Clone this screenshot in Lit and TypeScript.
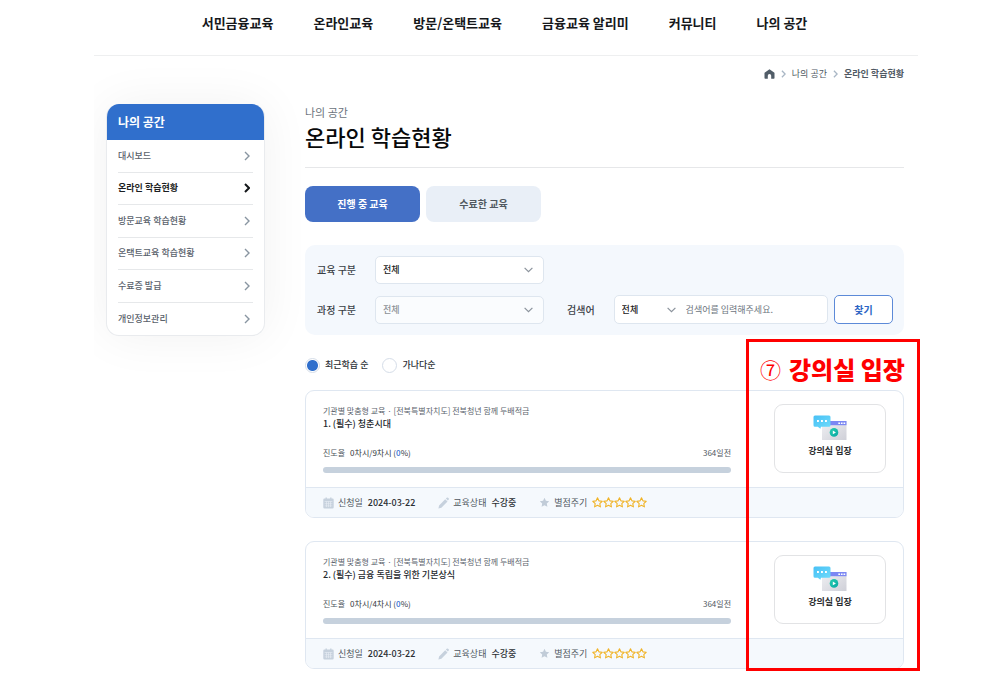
import { LitElement, html, css, svg } from "lit";
import { customElement, property, state } from "lit/decorators.js";
import { classMap } from "lit/directives/class-map.js";

const base = css`
  *, *::before, *::after { box-sizing: border-box; }
  button, input, select { font: inherit; color: inherit; margin: 0; }
  a { color: inherit; text-decoration: none; }
  svg { display: block; flex: none; }
`;

const chevronRight = (w = 1.6) => html`
  <svg width="6" height="10" viewBox="0 0 6 10" fill="none" stroke="currentColor" stroke-width=${w} aria-hidden="true">
    <path d="M1 1l4 4-4 4" />
  </svg>`;

const chevronDown = html`
  <svg class="arrow" width="9" height="6" viewBox="0 0 9 6" fill="none" stroke="#8b939c" stroke-width="1.2" aria-hidden="true">
    <path d="M.6 .8l3.9 3.9L8.4 .8" />
  </svg>`;

const STAR = "M6 .9l1.55 3.3 3.6.45-2.65 2.5.68 3.6L6 8.95 2.82 10.75l.68-3.6L.85 4.65l3.6-.45z";

interface Course {
  category: string;
  title: string;
  lessons: number;
  remain: string;
  applied: string;
  status: string;
}

@customElement("side-menu")
export class SideMenu extends LitElement {
  @property({ attribute: false }) items: string[] = [];
  @property() current = "";

  static styles = [base, css`
    :host { display: block; }
    .box {
      border-radius: 13px;
      overflow: hidden;
      background: #fff;
      border: 1px solid #e9ebee;
      border-top: 0;
      box-shadow: 0 0 50px rgba(0, 0, 0, 0.06);
    }
    .title {
      margin: 0 -1px;
      padding: 0 12px;
      height: 36px;
      background: #306fcc;
      color: #fff;
      font-size: 12px;
      line-height: 36px;
      font-weight: 700;
    }
    .list {
      display: grid;
      grid-auto-rows: 1fr;
      height: 195px;
      margin: 0;
      padding: 0 11px;
      list-style: none;
    }
    .item { display: grid; border-bottom: 1px solid #e6e8ea; }
    .item:last-child { border-bottom: 0; }
    .link {
      display: flex;
      align-items: center;
      justify-content: space-between;
      padding-right: 3px;
      font-size: 9px;
      font-weight: 500;
      color: #59616b;
    }
    .link svg { color: #8995a1; }
    .link.on { color: #1b1e22; font-weight: 700; }
    .link.on svg { color: #14171a; }
  `];

  render() {
    return html`
      <nav class="box" aria-label="나의 공간">
        <div class="title">나의 공간</div>
        <ul class="list">
          ${this.items.map((name) => html`
            <li class="item">
              <a href="#" class=${classMap({ link: true, on: name === this.current })}>
                ${name}${chevronRight(name === this.current ? 2 : 1.4)}
              </a>
            </li>`)}
        </ul>
      </nav>`;
  }
}

@customElement("course-card")
export class CourseCard extends LitElement {
  @property({ attribute: false }) course!: Course;

  static styles = [base, css`
    :host { display: block; }
    .card { border: 1px solid #dfe7f1; border-radius: 9px; overflow: hidden; background: #fff; }
    .body { display: flex; align-items: flex-start; height: 96px; padding: 13px 17px; gap: 43px; }
    .info { flex: 1; min-width: 0; }
    .category { margin: 0; font-size: 8px; line-height: 13px; color: #5d656e; }
    .name { margin: 0; font-size: 9px; line-height: 13px; font-weight: 500; color: #24282d; }
    .status { display: flex; margin-top: 16px; gap: 5px; font-size: 8px; line-height: 13px; color: #4f5760; }
    .count { color: #33383e; }
    .count b { font-weight: 500; color: #2f6fd0; }
    .remain { margin-left: auto; }
    .bar {
      display: block;
      width: 100%;
      height: 6px;
      margin-top: 8px;
      appearance: none;
      border: 0;
      border-radius: 3px;
      overflow: hidden;
      background: #c6d1dd;
    }
    .bar::-webkit-progress-bar { background: #c6d1dd; }
    .bar::-webkit-progress-value { background: #306fcc; }
    .enter {
      display: flex;
      flex-direction: column;
      align-items: center;
      gap: 3px;
      width: 112px;
      height: 69px;
      padding: 10px 0 0;
      border: 1px solid #e2e3e5;
      border-radius: 9px;
      background: #fff;
      font-size: 9px;
      line-height: 14px;
      font-weight: 700;
      color: #2b2d30;
    }
    .foot {
      display: flex;
      align-items: center;
      gap: 23px;
      height: 30px;
      padding: 0 17px;
      border-top: 1px solid #dfe7f1;
      background: #f5f9fd;
      font-size: 9px;
      line-height: 14px;
      color: #4f5760;
    }
    .fact { display: flex; align-items: center; gap: 4px; }
    .value { margin-left: 1px; font-weight: 500; color: #2b2f34; }
    .stars { display: flex; margin-left: 1px; }
  `];

  render() {
    const c = this.course;
    return html`
      <article class="card">
        <div class="body">
          <div class="info">
            <p class="category">${c.category}</p>
            <h2 class="name">${c.title}</h2>
            <div class="status">
              <span>진도율</span>
              <span class="count">0차시/${c.lessons}차시 (<b>0</b>%)</span>
              <span class="remain">${c.remain}</span>
            </div>
            <progress class="bar" max="100" value="0" aria-label="진도율"></progress>
          </div>
          <button class="enter" type="button">
            <svg width="34" height="26" viewBox="0 0 34 26" aria-hidden="true">
              <defs>
                <linearGradient id="win" x1="0" y1="0" x2="1" y2="1">
                  <stop offset="0" stop-color="#f0f0f3" /><stop offset="1" stop-color="#cfd0d8" />
                </linearGradient>
                <linearGradient id="talk" x1="0" y1="0" x2="1" y2="1">
                  <stop offset="0" stop-color="#48c0f5" /><stop offset="1" stop-color="#6fdcfb" />
                </linearGradient>
                <linearGradient id="play" x1="0" y1="0" x2="1" y2="1">
                  <stop offset="0" stop-color="#25cfae" /><stop offset="1" stop-color="#0aa7a4" />
                </linearGradient>
              </defs>
              <rect x="9" y="6" width="24.5" height="19" fill="url(#win)" />
              <rect x="9" y="6" width="24.5" height="4.2" fill="#7b87f3" />
              <path d="M25.3 7.4h1.7v1.5h-1.7zM27.9 7.4h1.7v1.5h-1.7zM30.5 7.4h1.7v1.5h-1.7z" fill="#fff" />
              <circle cx="21" cy="17.4" r="4.3" fill="url(#play)" />
              <path d="M19.8 15.5l3.1 1.9-3.1 1.9z" fill="#fff" />
              <path d="M2 .6h14a1.5 1.5 0 0 1 1.5 1.5v8.2a1.5 1.5 0 0 1-1.5 1.5H8l-.6 1.9-2.6-1.9H2A1.5 1.5 0 0 1 .5 10.3V2.1A1.5 1.5 0 0 1 2 .6z" fill="url(#talk)" />
              <path d="M4 5h1.9v1.9H4zM8 5h1.9v1.9H8zM12 5h1.9v1.9H12z" fill="#fff" />
            </svg>
            강의실 입장
          </button>
        </div>
        <div class="foot">
          <span class="fact">
            <svg width="11" height="12" viewBox="0 0 11 12" aria-hidden="true">
              <path d="M1.5 1.5h1V.4h1.4v1.1h3.2V.4h1.4v1.1h1a1.2 1.2 0 0 1 1.2 1.2v7.6a1.2 1.2 0 0 1-1.2 1.2h-8A1.2 1.2 0 0 1 .3 10.3V2.7a1.2 1.2 0 0 1 1.2-1.2z" fill="#c6d1dd" />
              <path d="M1.6 4.5h7.8M1.6 6.7h7.8M1.6 8.9h7.8M3.5 4.5v5.6M5.5 4.5v5.6M7.5 4.5v5.6" stroke="#eef3f8" stroke-width=".5" />
            </svg>
            신청일 <span class="value">${c.applied}</span>
          </span>
          <span class="fact">
            <svg width="11" height="12" viewBox="0 0 11 12" fill="#c6d1dd" aria-hidden="true">
              <path d="M.4 11.4l.7-3L7.2 2.3l2.3 2.3-6.1 6.1zM7.9 1.6l.8-.8a1 1 0 0 1 1.4 0l.5.5a1 1 0 0 1 0 1.4l-.8.8z" />
            </svg>
            교육상태 <span class="value">${c.status}</span>
          </span>
          <span class="fact">
            <svg width="11" height="11" viewBox="0 0 12 12" fill="#c1ccd8" aria-hidden="true"><path d=${STAR} /></svg>
            별점주기
            <span class="stars" role="img" aria-label="별점 0점">
              ${[1, 2, 3, 4, 5].map(() => html`
                <svg width="11" height="11" viewBox="0 0 12 12" fill="none" stroke="#f0b429" stroke-width="1.2" stroke-linejoin="round">
                  ${svg`<path d=${STAR} />`}
                </svg>`)}
            </span>
          </span>
        </div>
      </article>`;
  }
}

@customElement("app-root")
export class AppRoot extends LitElement {
  @state() private tab = 0;

  private menu = ["서민금융교육", "온라인교육", "방문/온택트교육", "금융교육 알리미", "커뮤니티", "나의 공간"];
  private side = ["대시보드", "온라인 학습현황", "방문교육 학습현황", "온택트교육 학습현황", "수료증 발급", "개인정보관리"];
  private courses: Course[] = [
    { category: "기관별 맞춤형 교육 · [전북특별자치도] 전북청년 함께 두배적금", title: "1. (필수) 청춘시대", lessons: 9, remain: "364일전", applied: "2024-03-22", status: "수강중" },
    { category: "기관별 맞춤형 교육 · [전북특별자치도] 전북청년 함께 두배적금", title: "2. (필수) 금융 독립을 위한 기본상식", lessons: 4, remain: "364일전", applied: "2024-03-22", status: "수강중" },
  ];

  static styles = [base, css`
    :host {
      display: block;
      background: #fff;
      color: #222;
      font-family: "Noto Sans CJK KR", "Noto Sans", sans-serif;
      font-size: 9px;
      line-height: 14px;
    }
    .page { padding: 0 82px 7px 94px; }
    .gnb {
      display: flex;
      justify-content: center;
      gap: 40px;
      height: 56px;
      padding: 13px 3px 0 0;
      border-bottom: 1px solid #eeeff0;
      font-size: 13px;
      line-height: 20px;
      font-weight: 700;
      color: #16181b;
    }
    .crumbs {
      display: flex;
      align-items: center;
      justify-content: flex-end;
      gap: 6px;
      height: 34px;
      padding: 1px 14px 0 0;
      color: #4f5963;
    }
    .crumbs svg { color: #a9b7c5; }
    .crumbs .home svg { color: #515d68; }
    .here { font-weight: 700; }
    .layout {
      display: grid;
      grid-template-columns: 159px minmax(0, 1fr);
      column-gap: 40px;
      align-items: start;
      padding: 14px 14px 0 12px;
      clip-path: inset(-60px -20px -20px 0);
    }
    .kicker { margin: 0; font-size: 11px; line-height: 16px; color: #6b737c; }
    .heading {
      margin: 0 0 18px;
      padding-bottom: 14px;
      border-bottom: 1px solid #e6e7e9;
      font-size: 22px;
      line-height: 33px;
      font-weight: 500;
      color: #08090a;
    }
    .tabs { display: flex; gap: 6px; }
    .tab {
      width: 115px;
      height: 36px;
      padding: 0;
      border: 0;
      border-radius: 8px;
      background: #e9eff7;
      color: #50585f;
      font-size: 10px;
      font-weight: 700;
    }
    .tab.on { background: #4470c6; color: #fff; }
    .filter {
      display: grid;
      grid-template-columns: 58px 169px auto minmax(0, 1fr) 59px;
      align-items: center;
      row-gap: 11px;
      margin-top: 23px;
      padding: 11px 11px 11px 12px;
      border-radius: 10px;
      background: #f4f8fd;
    }
    .label { grid-column: 1; font-size: 10px; font-weight: 500; color: #3a4046; }
    .label.search { grid-column: 3; margin: 0 19px 0 23px; }
    .select { display: grid; align-items: center; }
    .select > * { grid-area: 1 / 1; }
    .select select {
      width: 100%;
      height: 28px;
      padding: 0 7px;
      border: 1px solid #dee6ef;
      border-radius: 5px;
      background: #fff;
      appearance: none;
      font-weight: 500;
    }
    .select select:disabled { background: #fafcfe; color: #8d9297; opacity: 1; }
    .arrow { justify-self: end; margin-right: 11px; pointer-events: none; }
    .query {
      display: flex;
      align-items: center;
      height: 29px;
      margin-right: 6px;
      border: 1px solid #dee6ef;
      border-radius: 5px;
      background: #fff;
    }
    .query .select { width: 64px; flex: none; }
    .query .select select { height: 27px; border: 0; background: none; }
    .query .arrow { margin-right: 3px; }
    .query input { flex: 1; min-width: 0; height: 27px; padding: 0 7px; border: 0; background: none; outline: 0; }
    .query input::placeholder { color: #6d757e; opacity: 1; }
    .find {
      height: 29px;
      padding: 0;
      border: 1px solid #5c8ad8;
      border-radius: 5px;
      background: #fff;
      color: #2c65c4;
      font-size: 10px;
      font-weight: 700;
    }
    .order { display: flex; gap: 14px; height: 16px; margin-top: 22px; }
    .choice { display: flex; align-items: center; gap: 5px; font-weight: 500; color: #2b2f34; }
    .choice input {
      appearance: none;
      width: 15px;
      height: 15px;
      border: 1px solid #d5dde8;
      border-radius: 50%;
      background: #fff;
    }
    .choice input:checked { background: radial-gradient(circle, #306fcc 5px, #fff 6px); }
    .results { position: relative; margin-top: 17px; }
    .cards { display: grid; row-gap: 23px; }
    .callout {
      position: absolute;
      inset: -51px -16px -2px auto;
      width: 174px;
      padding: 11px 0 0 11px;
      border: 3px solid #f00;
      color: #f00;
      pointer-events: none;
    }
    .callout-text { display: flex; align-items: center; gap: 8px; font-size: 24px; line-height: 32px; font-weight: 900; }
    .num { font-size: 21px; font-weight: 400; }
  `];

  render() {
    return html`
      <div class="page">
        <nav class="gnb" aria-label="주 메뉴">${this.menu.map((m) => html`<a href="#">${m}</a>`)}</nav>
        <div class="crumbs">
          <a class="home" href="#" aria-label="홈">
            <svg width="11" height="10" viewBox="0 0 11 10" fill="currentColor" aria-hidden="true">
              <path d="M5.5 .3l4.6 3.1a.8.8 0 0 1 .4.7v4.9a.7.7 0 0 1-.7.7H7.2V6.8a1.7 1.7 0 0 0-3.4 0v2.900H1.200a.7.7 0 0 1-.7-.7V4.100a.8.8 0 0 1 .4-.7z" />
            </svg>
          </a>
          <svg width="5" height="8" viewBox="0 0 6 10" fill="none" stroke="currentColor" stroke-width="1.6" aria-hidden="true"><path d="M1 1l4 4-4 4" /></svg>
          <a href="#">나의 공간</a>
          <svg width="5" height="8" viewBox="0 0 6 10" fill="none" stroke="currentColor" stroke-width="1.6" aria-hidden="true"><path d="M1 1l4 4-4 4" /></svg>
          <a class="here" href="#">온라인 학습현황</a>
        </div>
        <div class="layout">
          <side-menu .items=${this.side} current="온라인 학습현황"></side-menu>
          <main>
            <p class="kicker">나의 공간</p>
            <h1 class="heading">온라인 학습현황</h1>
            <div class="tabs" role="tablist">
              ${["진행 중 교육", "수료한 교육"].map((t, i) => html`
                <button type="button" role="tab" aria-selected=${this.tab === i}
                  class=${classMap({ tab: true, on: this.tab === i })}
                  @click=${() => { this.tab = i; }}>${t}</button>`)}
            </div>
            <form class="filter" @submit=${(e: Event) => e.preventDefault()}>
              <label class="label" for="kind">교육 구분</label>
              <div class="select"><select id="kind"><option>전체</option></select>${chevronDown}</div>
              <label class="label" for="course">과정 구분</label>
              <div class="select"><select id="course" disabled><option>전체</option></select>${chevronDown}</div>
              <label class="label search" for="word">검색어</label>
              <div class="query">
                <div class="select"><select aria-label="검색 범위"><option>전체</option></select>${chevronDown}</div>
                <input id="word" type="text" placeholder="검색어를 입력해주세요." />
              </div>
              <button class="find" type="submit">찾기</button>
            </form>
            <div class="order" role="radiogroup" aria-label="정렬">
              <label class="choice"><input type="radio" name="order" checked />최근학습 순</label>
              <label class="choice"><input type="radio" name="order" />가나다순</label>
            </div>
            <section class="results">
              <div class="cards">${this.courses.map((c) => html`<course-card .course=${c}></course-card>`)}</div>
              <div class="callout"><div class="callout-text"><span class="num">⑦</span>강의실 입장</div></div>
            </section>
          </main>
        </div>
      </div>`;
  }
}
